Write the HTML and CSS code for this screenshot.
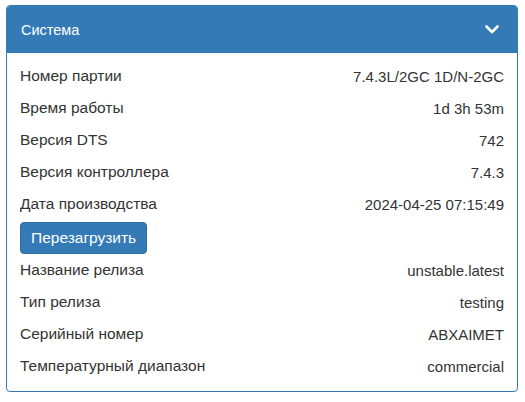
FILE: index.html
```html
<!DOCTYPE html>
<html>
<head>
<meta charset="utf-8">
<link rel="stylesheet" href="styles.css">
</head>
<body>
<div class="panel">
  <div class="panel-heading">
    <span class="title">Система</span>
    <svg class="chevron" width="14" height="9" viewBox="0 0 14 9"><path d="M1.5 1.5 L7 7 L12.5 1.5" fill="none" stroke="#fff" stroke-width="2.6" stroke-linecap="round" stroke-linejoin="round"/></svg>
  </div>
  <div class="panel-body">
    <div class="row"><span class="label">Номер партии</span><span class="value">7.4.3L/2GC 1D/N-2GC</span></div>
    <div class="row"><span class="label">Время работы</span><span class="value">1d 3h 53m</span></div>
    <div class="row"><span class="label">Версия DTS</span><span class="value">742</span></div>
    <div class="row"><span class="label">Версия контроллера</span><span class="value">7.4.3</span></div>
    <div class="row"><span class="label">Дата производства</span><span class="value">2024-04-25 07:15:49</span></div>
    <button class="btn">Перезагрузить</button>
    <div class="row"><span class="label">Название релиза</span><span class="value">unstable.latest</span></div>
    <div class="row"><span class="label">Тип релиза</span><span class="value">testing</span></div>
    <div class="row"><span class="label">Серийный номер</span><span class="value">ABXAIMET</span></div>
    <div class="row"><span class="label">Температурный диапазон</span><span class="value">commercial</span></div>
  </div>
</div>
</body>
</html>
```

FILE: styles.css
```css
* { box-sizing: border-box; }
body {
  margin: 0;
  padding: 5px 7px 0 6px;
  background: #fff;
  font-family: "Liberation Sans", Arial, sans-serif;
  color: #333;
}
.panel {
  width: 512px;
  border: 1px solid #337ab7;
  border-radius: 4px;
  overflow: hidden;
}
.panel-heading {
  background: #337ab7;
  color: #fff;
  height: 47px;
  display: flex;
  align-items: center;
  justify-content: space-between;
  padding: 0 18px 0 14px;
  font-size: 14.5px;
}
.chevron { display: block; }
.panel-body {
  padding: 7px 13px 9px 13px;
}
.row {
  display: flex;
  justify-content: space-between;
  align-items: center;
  height: 32px;
}
.label { font-size: 15.5px; }
.value { font-size: 15px; }
.btn {
  display: block;
  margin: 2px 0 0 0;
  height: 32px;
  padding: 0 10px;
  background: #337ab7;
  color: #fff;
  border: 1px solid #2e6da4;
  border-radius: 4px;
  font-family: "Liberation Sans", Arial, sans-serif;
  font-size: 15.5px;
}
```
